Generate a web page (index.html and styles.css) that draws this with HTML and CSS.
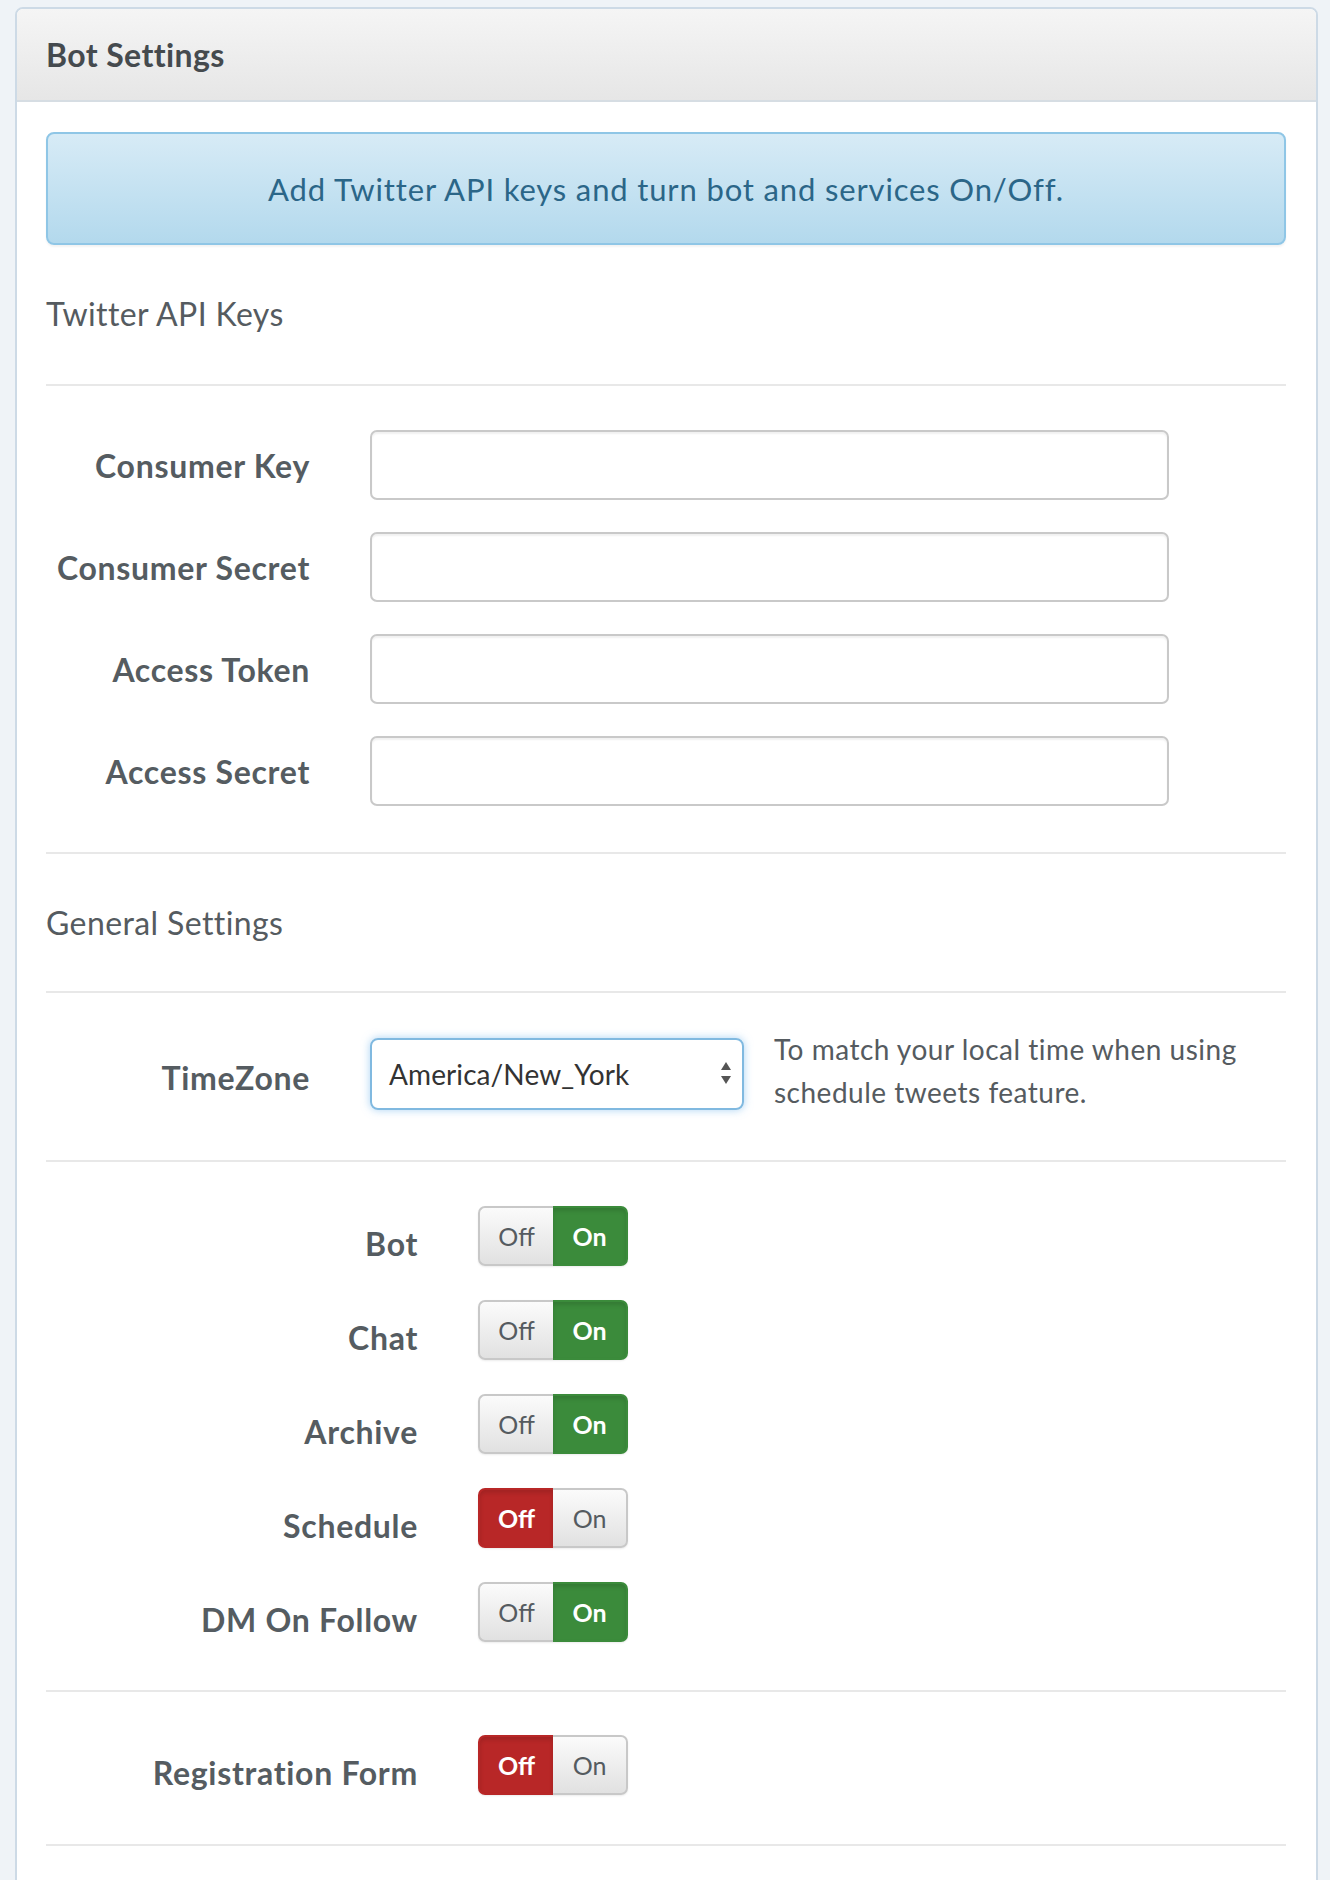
FILE: index.html
```html
<!DOCTYPE html>
<html>
<head>
<meta charset="utf-8">
<link rel="stylesheet" href="styles.css">
</head>
<body>
<div class="panel">
  <div class="panel-heading"><h3 class="panel-title">Bot Settings</h3></div>
  <div class="panel-body">
    <div class="alert">Add Twitter API keys and turn bot and services On/Off.</div>

    <div class="legend">Twitter API Keys</div>
    <div class="group keys">
      <div class="row"><label class="lbl">Consumer Key</label><input class="input" type="text"></div>
      <div class="row"><label class="lbl">Consumer Secret</label><input class="input" type="text"></div>
      <div class="row"><label class="lbl">Access Token</label><input class="input" type="text"></div>
      <div class="row"><label class="lbl">Access Secret</label><input class="input" type="text"></div>
    </div>

    <div class="legend legend-2">General Settings</div>
    <div class="group tz">
      <div class="row tz-row">
        <label class="lbl">TimeZone</label>
        <div class="select">
          <span class="select-value">America/New_York</span>
          <svg class="select-arrows" width="12" height="24" viewBox="0 0 12 24"><path d="M6 0 L11 8 L1 8 Z" fill="#555"/><path d="M1 14 L11 14 L6 22 Z" fill="#555"/></svg>
        </div>
        <p class="help">To match your local time when using<br>schedule tweets feature.</p>
      </div>
    </div>

    <div class="group toggles">
      <div class="row trow"><label class="lbl tlbl">Bot</label><div class="toggle"><span class="tbtn">Off</span><span class="tbtn on-active">On</span></div></div>
      <div class="row trow"><label class="lbl tlbl">Chat</label><div class="toggle"><span class="tbtn">Off</span><span class="tbtn on-active">On</span></div></div>
      <div class="row trow"><label class="lbl tlbl">Archive</label><div class="toggle"><span class="tbtn">Off</span><span class="tbtn on-active">On</span></div></div>
      <div class="row trow"><label class="lbl tlbl">Schedule</label><div class="toggle"><span class="tbtn off-active">Off</span><span class="tbtn">On</span></div></div>
      <div class="row trow"><label class="lbl tlbl">DM On Follow</label><div class="toggle"><span class="tbtn">Off</span><span class="tbtn on-active">On</span></div></div>
    </div>

    <div class="group reg">
      <div class="row trow"><label class="lbl tlbl">Registration Form</label><div class="toggle"><span class="tbtn off-active">Off</span><span class="tbtn">On</span></div></div>
    </div>
  </div>
</div>
</body>
</html>
```

FILE: styles.css
```css
html, body {
  margin: 0;
  padding: 0;
}
body {
  background: #eff3f7;
  font-family: Lato, "Open Sans", "DejaVu Sans", sans-serif;
  color: #555b60;
  height: 1880px;
  overflow: hidden;
}
.panel {
  margin: 7px 12px 0 15px;
  border: 2px solid #cddae6;
  border-radius: 8px 8px 0 0;
  background: #fff;
  min-height: 1950px;
}
.panel-heading {
  height: 91px;
  display: flex;
  align-items: center;
  padding: 0 29px;
  background: linear-gradient(#f5f5f5, #e6e6e6);
  border-bottom: 2px solid #d6dde3;
  border-radius: 6px 6px 0 0;
}
.panel-title {
  margin: 0;
  font-size: 32px;
  font-weight: 700;
  letter-spacing: 0.4px;
  color: #454a4e;
}
.panel-body {
  padding: 30px 30px 0 29px;
}
.alert {
  height: 109px;
  display: flex;
  align-items: center;
  justify-content: center;
  border: 2px solid #8fc6e6;
  border-radius: 8px;
  background: linear-gradient(#d7ebf6, #b3d9ed);
  color: #2b6688;
  font-size: 31px;
  letter-spacing: 0.85px;
  box-shadow: 0 2px 2px rgba(0,0,0,0.05);
}
.legend {
  height: 136px;
  padding-bottom: 3px;
  display: flex;
  align-items: center;
  font-size: 32px;
  letter-spacing: 0.4px;
  color: #555b60;
  border-bottom: 2px solid #e8e8e8;
}
.legend-2 {
  height: 137px;
  padding-bottom: 0;
}
.group {
  display: flex;
  flex-direction: column;
  border-bottom: 2px solid #e8e8e8;
}
.keys {
  padding: 44px 0 46px;
  gap: 32px;
}
.row {
  display: flex;
  align-items: center;
}
.lbl {
  width: 264px;
  flex: none;
  text-align: right;
  font-size: 32px;
  font-weight: 700;
  letter-spacing: 0.7px;
  color: #555c61;
  margin-right: 60px;
}
.input {
  box-sizing: border-box;
  width: 799px;
  height: 70px;
  border: 2px solid #c9c9c9;
  border-radius: 7px;
  box-shadow: inset 0 2px 2px rgba(0,0,0,0.06);
  background: #fff;
  margin: 0;
  padding: 0 20px;
  font-family: inherit;
  font-size: 28px;
}
.tz {
  padding: 45px 0 50px;
}
.tz-row {
  align-items: flex-start;
}
.tz-row .lbl {
  line-height: 72px;
  padding-top: 4px;
  margin-bottom: -4px;
}
.select {
  position: relative;
  box-sizing: border-box;
  width: 374px;
  height: 72px;
  border: 2px solid #80b9e0;
  border-radius: 8px;
  box-shadow: 0 0 8px rgba(102,175,233,0.55);
  display: flex;
  align-items: center;
  padding-left: 17px;
  font-size: 28px;
  letter-spacing: 0.1px;
  color: #333;
  flex: none;
}
.select-arrows {
  position: absolute;
  right: 10px;
  top: 22px;
}
.help {
  margin: -10px 0 -4px 30px;
  font-size: 28px;
  line-height: 43px;
  letter-spacing: 0.5px;
  color: #555b60;
}
.toggles {
  padding: 44px 0 48px;
  gap: 34px;
}
.reg {
  padding: 43px 0 49px;
}
.trow {
  align-items: flex-start;
}
.tlbl {
  width: 372px;
  line-height: 60px;
  padding-top: 8px;
  margin-bottom: -8px;
}
.toggle {
  display: flex;
  width: 150px;
  height: 60px;
  border-radius: 7px;
  box-shadow: 0 1px 2px rgba(0,0,0,0.08);
}
.tbtn {
  box-sizing: border-box;
  width: 75px;
  height: 60px;
  display: flex;
  align-items: center;
  justify-content: center;
  font-size: 25px;
  color: #555b60;
  background: linear-gradient(#fbfbfb, #e1e1e1);
  border: 2px solid #c8c8c8;
}
.tbtn:first-child {
  border-radius: 7px 0 0 7px;
  border-right: none;
}
.tbtn:last-child {
  border-radius: 0 7px 7px 0;
  border-left: none;
}
.on-active {
  background: #3b8b3b;
  border-color: #3b8b3b;
  box-shadow: inset 0 3px 4px rgba(0,0,0,0.12);
  color: #fff;
  font-weight: 700;
}
.off-active {
  background: #b82727;
  border-color: #b82727;
  box-shadow: inset 0 3px 4px rgba(0,0,0,0.12);
  color: #fff;
  font-weight: 700;
}
```
